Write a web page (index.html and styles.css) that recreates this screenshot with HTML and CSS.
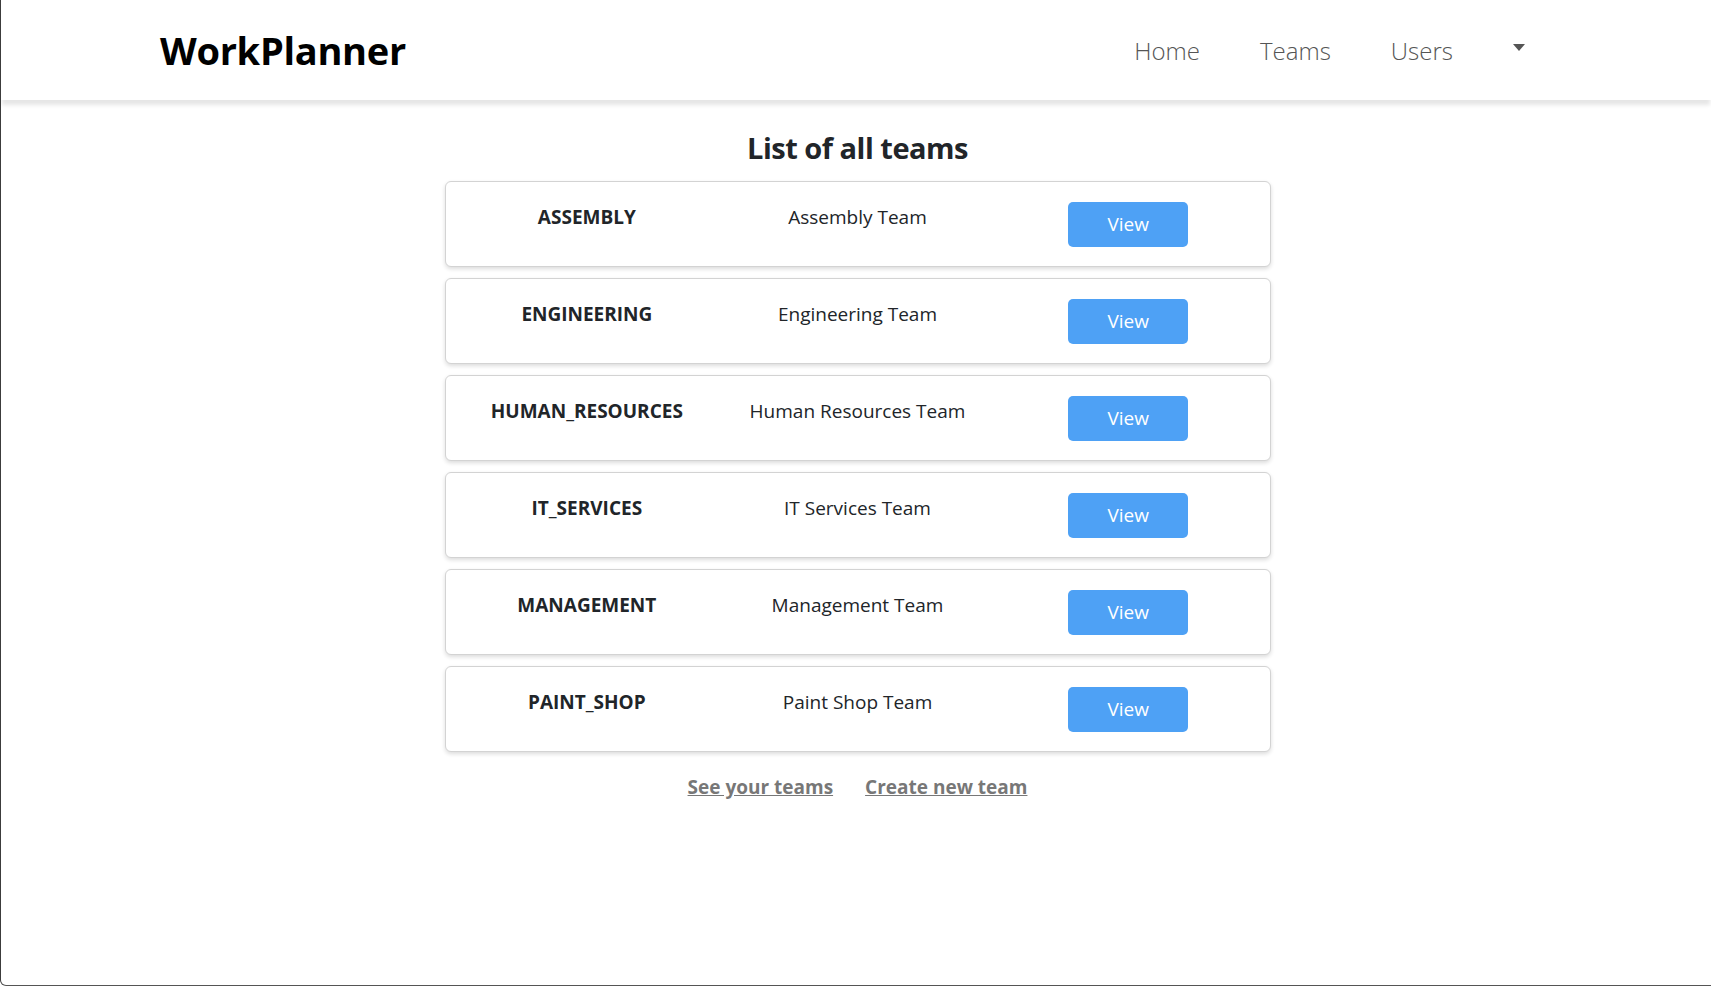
FILE: index.html
```html
<!DOCTYPE html>
<html lang="en">
<head>
<meta charset="utf-8">
<title>WorkPlanner</title>
<link rel="stylesheet" href="styles.css">
</head>
<body>
<header class="navbar">
  <div class="brand">WorkPlanner</div>
  <nav class="nav">
    <a class="nav-link" href="#">Home</a>
    <a class="nav-link" href="#">Teams</a>
    <a class="nav-link" href="#">Users</a>
    <span class="caret" aria-hidden="true"></span>
  </nav>
</header>
<main class="main">
  <h2 class="title">List of all teams</h2>
  <div class="team-list">
    <div class="team-card">
      <div class="col name">ASSEMBLY</div>
      <div class="col desc">Assembly Team</div>
      <div class="col"><button class="btn">View</button></div>
    </div>
    <div class="team-card">
      <div class="col name">ENGINEERING</div>
      <div class="col desc">Engineering Team</div>
      <div class="col"><button class="btn">View</button></div>
    </div>
    <div class="team-card">
      <div class="col name">HUMAN_RESOURCES</div>
      <div class="col desc">Human Resources Team</div>
      <div class="col"><button class="btn">View</button></div>
    </div>
    <div class="team-card">
      <div class="col name">IT_SERVICES</div>
      <div class="col desc">IT Services Team</div>
      <div class="col"><button class="btn">View</button></div>
    </div>
    <div class="team-card">
      <div class="col name">MANAGEMENT</div>
      <div class="col desc">Management Team</div>
      <div class="col"><button class="btn">View</button></div>
    </div>
    <div class="team-card">
      <div class="col name">PAINT_SHOP</div>
      <div class="col desc">Paint Shop Team</div>
      <div class="col"><button class="btn">View</button></div>
    </div>
  </div>
  <div class="links">
    <a href="#" class="link">See your teams</a>
    <a href="#" class="link">Create new team</a>
  </div>
</main>
</body>
</html>
```
FILE: styles.css
```css
* { box-sizing: border-box; }

html, body { height: 100%; }

body {
  margin: 0;
  font-family: "Open Sans", "Noto Sans", sans-serif;
  color: #212529;
  background: #fff;
  border-left: 1px solid #3c3c3c;
  border-bottom: 1px solid #555;
  border-bottom-left-radius: 6px;
}

.navbar {
  height: 100px;
  display: flex;
  align-items: center;
  justify-content: space-between;
  padding: 0 186px 0 159px;
  background: #fff;
  box-shadow: 0 6px 4px -1px rgba(0, 0, 0, 0.1);
  position: relative;
}

.brand {
  font-size: 38px;
  font-weight: 700;
  color: #000;
  letter-spacing: -0.3px;
}

.nav {
  display: flex;
  align-items: center;
  gap: 60px;
}

.nav-link {
  font-size: 24px;
  font-weight: 300;
  color: #555;
  text-decoration: none;
}

.caret {
  width: 0;
  height: 0;
  margin-left: 0;
  margin-top: -6px;
  border-left: 6.5px solid transparent;
  border-right: 6.5px solid transparent;
  border-top: 7px solid #555;
}

.main {
  display: flex;
  flex-direction: column;
  align-items: center;
  padding-top: 31px;
  padding-left: 3px;
}

.title {
  margin: 0 0 15px;
  font-size: 29px;
  font-weight: 700;
  line-height: 1.2;
  letter-spacing: -0.5px;
  color: #212529;
}

.team-list {
  width: 826px;
  display: flex;
  flex-direction: column;
  gap: 11px;
}

.team-card {
  display: grid;
  grid-template-columns: 1fr 1fr 1fr;
  align-items: start;
  padding: 20px 6px 19px;
  border: 1px solid #d3d3d3;
  border-radius: 6px;
  box-shadow: 0 2px 4px rgba(0, 0, 0, 0.14);
  background: #fff;
}

.col {
  text-align: center;
  font-size: 19px;
  line-height: 30px;
}

.name { font-weight: 700; }

.desc { font-weight: 400; }

.btn {
  width: 120px;
  height: 45px;
  border: 0;
  border-radius: 5px;
  background: #4ea1f5;
  color: #fff;
  font-family: inherit;
  font-size: 19px;
  line-height: 30px;
  cursor: pointer;
}

.links {
  margin-top: 20px;
  display: flex;
  gap: 32px;
}

.link {
  font-size: 19px;
  font-weight: 700;
  line-height: 30px;
  color: #777;
  text-decoration: underline;
}
```
